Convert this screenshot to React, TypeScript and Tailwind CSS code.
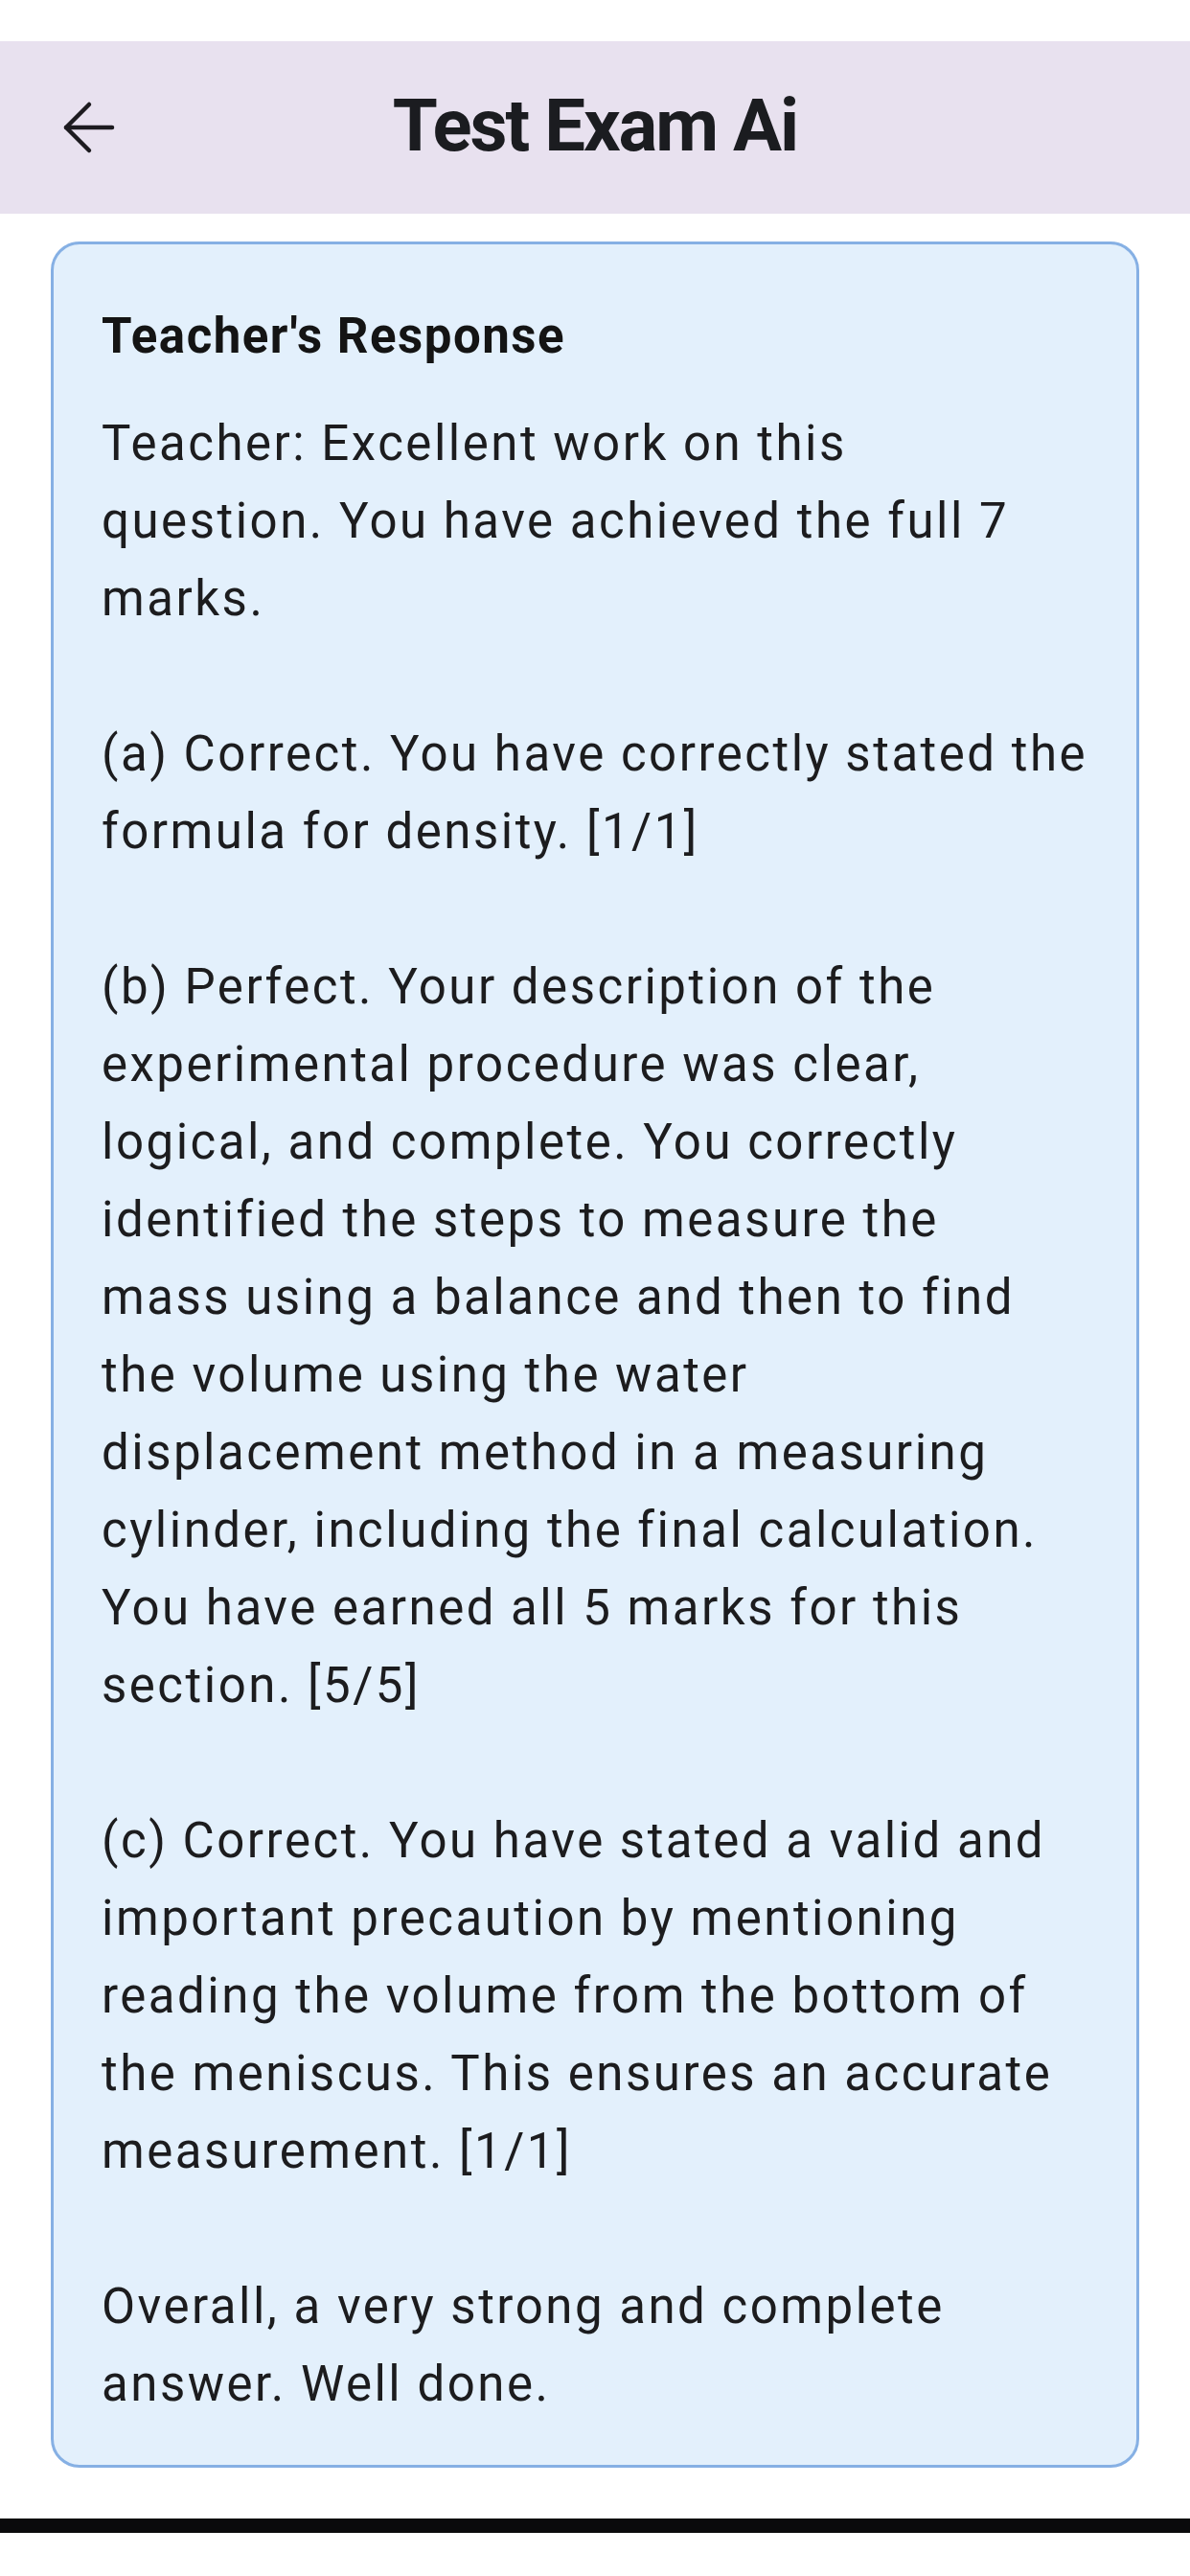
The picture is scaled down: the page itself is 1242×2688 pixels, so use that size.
import React from "react";

const lines: string[] = [
  "Teacher: Excellent work on this",
  "question. You have achieved the full 7",
  "marks.",
  "",
  "(a) Correct. You have correctly stated the",
  "formula for density. [1/1]",
  "",
  "(b) Perfect. Your description of the",
  "experimental procedure was clear,",
  "logical, and complete. You correctly",
  "identified the steps to measure the",
  "mass using a balance and then to find",
  "the volume using the water",
  "displacement method in a measuring",
  "cylinder, including the final calculation.",
  "You have earned all 5 marks for this",
  "section. [5/5]",
  "",
  "(c) Correct. You have stated a valid and",
  "important precaution by mentioning",
  "reading the volume from the bottom of",
  "the meniscus. This ensures an accurate",
  "measurement. [1/1]",
  "",
  "Overall, a very strong and complete",
  "answer. Well done.",
];

export default function App() {
  return (
    <div className="w-[1242px] min-h-[2688px] bg-white flex flex-col font-['Roboto',sans-serif]">
      <div className="h-[43px] bg-white" />
      <header className="h-[180px] bg-[#E8E1EF] grid grid-cols-[1fr_auto_1fr] items-center">
        <div className="flex items-center pl-[60px]">
          <svg width="64" height="64" viewBox="0 0 64 64" fill="none">
            <path d="M57 32H9" stroke="#1d1b20" strokeWidth="4.5" strokeLinecap="round" />
            <path d="M33 8L9 32L33 56" stroke="#1d1b20" strokeWidth="4.5" strokeLinecap="round" strokeLinejoin="round" />
          </svg>
        </div>
        <h1 className="text-[76px] leading-none font-bold tracking-[-2px] text-[#1b1c20] pb-[4px]">Test Exam Ai</h1>
        <div />
      </header>
      <main className="px-[53px] pt-[29px]">
        <section className="border-[3px] border-[#86B0E4] bg-[#E3F0FC] rounded-[30px] pl-[50px] pr-[40px] pt-[65px] pb-[44px]">
          <h2 className="text-[51px] leading-[61px] font-bold tracking-[1.5px] text-[#141414]">Teacher's Response</h2>
          <div className="mt-[41px] text-[51px] leading-[81px] tracking-[2.5px] text-[#1c1c1e]">
            {lines.map((l, i) => (
              <div key={i} className="whitespace-nowrap h-[81px]">
                {l}
              </div>
            ))}
          </div>
        </section>
      </main>
      <div className="h-[53px]" />
      <div className="h-[15px] bg-[#0a0a0c]" />
      <div className="flex-1 bg-white" />
    </div>
  );
}
